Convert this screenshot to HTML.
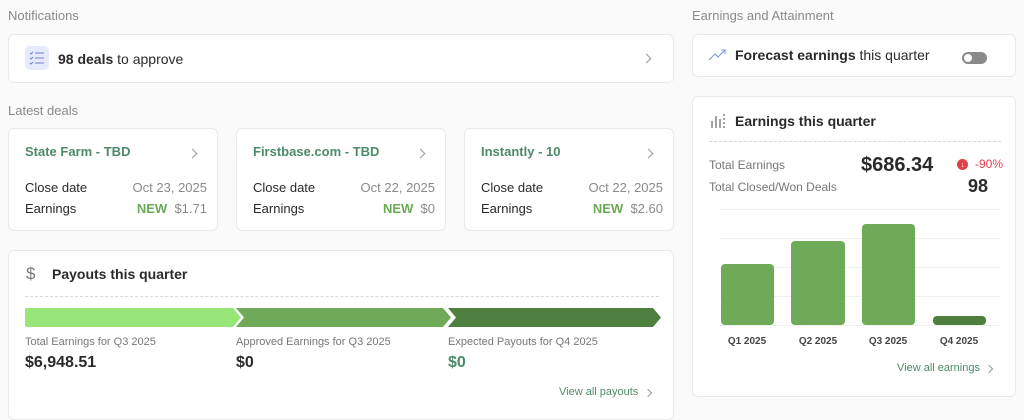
<!DOCTYPE html>
<html><head><style>
*{box-sizing:border-box;margin:0;padding:0}
body{width:1024px;height:410px;overflow:hidden;background:#fafafa;font-family:"Liberation Sans",sans-serif;position:relative;color:#2a2a2a}
.a{position:absolute}
.card{position:absolute;background:#fff;border:1px solid #e9e9e9;border-radius:6px}
.sec{color:#8a8a8a;font-size:13px}
.chev{position:absolute;width:7px;height:7px;border-right:1.2px solid #999;border-top:1.2px solid #999;transform:rotate(45deg)}
.dt{font-size:13px;color:#2a2a2a}
.gr{color:#8a8a8a}
.new{color:#6aaa55;font-weight:bold}
.ttl{color:#4d8a6a;font-weight:bold;font-size:13px}
.grid{position:absolute;left:720px;width:280px;height:1px;background:#efefef}
.bar{position:absolute;background:#6faa59;border-radius:4px}
.ql{position:absolute;font-size:10px;color:#444;top:336px;width:60px;text-align:center;font-weight:bold}
</style></head><body>
<div class="a sec" style="left:8px;top:8px">Notifications</div>
<div class="card" style="left:8px;top:34px;width:666px;height:49px">
  <div class="a" style="left:16px;top:11px;width:24px;height:24px;background:#e6ebfb;border-radius:5px">
    <svg width="24" height="24" viewBox="0 0 24 24" fill="none" stroke="#6c7fd8" stroke-width="1"><path d="M5 7l1 1 2-2M10 7h9M5 12l1 1 2-2M10 12h9M5 17l1 1 2-2M10 17h9"/></svg>
  </div>
  <div class="a" style="left:49px;top:16px;font-size:14px"><b>98 deals</b> to approve</div>
  <div class="chev" style="left:634px;top:20px"></div>
</div>
<div class="a sec" style="left:8px;top:103px">Latest deals</div>

<div class="card" style="left:8px;top:128px;width:210px;height:103px">
  <div class="a ttl" style="left:16px;top:15px">State Farm - TBD</div><div class="chev" style="left:180px;top:21px"></div>
  <div class="a dt" style="left:16px;top:51px">Close date</div><div class="a dt gr" style="right:10px;top:51px">Oct 23, 2025</div>
  <div class="a dt" style="left:16px;top:72px">Earnings</div><div class="a dt" style="right:10px;top:72px"><span class="new">NEW</span>&nbsp; <span class="gr">$1.71</span></div>
</div>
<div class="card" style="left:236px;top:128px;width:210px;height:103px">
  <div class="a ttl" style="left:16px;top:15px">Firstbase.com - TBD</div><div class="chev" style="left:180px;top:21px"></div>
  <div class="a dt" style="left:16px;top:51px">Close date</div><div class="a dt gr" style="right:10px;top:51px">Oct 22, 2025</div>
  <div class="a dt" style="left:16px;top:72px">Earnings</div><div class="a dt" style="right:10px;top:72px"><span class="new">NEW</span>&nbsp; <span class="gr">$0</span></div>
</div>
<div class="card" style="left:464px;top:128px;width:210px;height:103px">
  <div class="a ttl" style="left:16px;top:15px">Instantly - 10</div><div class="chev" style="left:180px;top:21px"></div>
  <div class="a dt" style="left:16px;top:51px">Close date</div><div class="a dt gr" style="right:10px;top:51px">Oct 22, 2025</div>
  <div class="a dt" style="left:16px;top:72px">Earnings</div><div class="a dt" style="right:10px;top:72px"><span class="new">NEW</span>&nbsp; <span class="gr">$2.60</span></div>
</div>

<div class="card" style="left:8px;top:250px;width:666px;height:170px">
  <div class="a" style="left:17px;top:13px;font-size:17px;color:#777">$</div>
  <div class="a" style="left:43px;top:15px;font-size:14px;font-weight:bold">Payouts this quarter</div>
  <div class="a" style="left:16px;top:45px;width:634px;border-top:1px dashed #d8d8d8"></div>
  <svg class="a" style="left:16px;top:57px" width="636" height="19">
    <path d="M0 2a2 2 0 012-2h206l8 9.5-8 9.5H2a2 2 0 01-2-2z" fill="#98e67a"/>
    <path d="M211 0h207l8 9.5-8 9.5H211l8-9.5z" fill="#6faa59"/>
    <path d="M423 0h205l8 9.5-8 9.5H423l8-9.5z" fill="#4f7f3f"/>
  </svg>
  <div class="a" style="left:16px;top:85px;font-size:11px;color:#777">Total Earnings for Q3 2025</div>
  <div class="a" style="left:16px;top:103px;font-size:16px;font-weight:bold">$6,948.51</div>
  <div class="a" style="left:227px;top:85px;font-size:11px;color:#777">Approved Earnings for Q3 2025</div>
  <div class="a" style="left:227px;top:103px;font-size:16px;font-weight:bold">$0</div>
  <div class="a" style="left:439px;top:85px;font-size:11px;color:#777">Expected Payouts for Q4 2025</div>
  <div class="a" style="left:439px;top:103px;font-size:16px;font-weight:bold;color:#4d8a6a">$0</div>
  <div class="a" style="left:550px;top:135px;font-size:11px;color:#4d8a6a">View all payouts</div>
  <div class="chev" style="left:636px;top:139px;width:6px;height:6px"></div>
</div>

<div class="a sec" style="left:692px;top:8px">Earnings and Attainment</div>
<div class="card" style="left:692px;top:34px;width:324px;height:43px">
  <svg class="a" style="left:16px;top:14px" width="18" height="12" fill="none" stroke="#7a95e0" stroke-width="1"><path d="M0 11l6-6 3 3 7-7M12 1h4v4"/></svg>
  <div class="a" style="left:42px;top:12px;font-size:14px"><b>Forecast earnings</b> this quarter</div>
  <div class="a" style="left:269px;top:17px;width:25px;height:12px;border-radius:6px;background:#8a8a8a"><div class="a" style="left:2px;top:2px;width:8px;height:8px;border-radius:50%;background:#fff"></div></div>
</div>
<div class="card" style="left:692px;top:96px;width:324px;height:301px">
  <svg class="a" style="left:17px;top:15px" width="16" height="16" stroke="#666" stroke-width="1.2"><path d="M2 9v7M6 4v12M10 7v9M14 2v2M14 6v2M14 10v2M14 14v2"/></svg>
  <div class="a" style="left:42px;top:16px;font-size:14px;font-weight:bold">Earnings this quarter</div>
  <div class="a" style="left:16px;top:44px;width:292px;border-top:1px dashed #d8d8d8"></div>
  <div class="a" style="left:16px;top:61px;font-size:12px;color:#777">Total Earnings</div>
  <div class="a" style="left:16px;top:83px;font-size:12px;color:#777">Total Closed/Won Deals</div>
  <div class="a" style="left:168px;top:57px;font-size:20px;font-weight:bold">$686.34</div>
  <div class="a" style="left:264px;top:62px;width:11px;height:11px;border-radius:50%;background:#e0404a;color:#fff;font-size:8px;text-align:center;line-height:11px;font-weight:bold">↓</div>
  <div class="a" style="left:282px;top:60px;font-size:12px;color:#e0404a">-90%</div>
  <div class="a" style="left:275px;top:79px;font-size:18px;font-weight:bold">98</div>
</div>
<div class="grid" style="top:209px"></div><div class="grid" style="top:238px"></div><div class="grid" style="top:267px"></div><div class="grid" style="top:296px"></div><div class="grid" style="top:325px"></div>
<div class="bar" style="left:721px;top:264px;width:53px;height:61px"></div>
<div class="bar" style="left:791px;top:241px;width:54px;height:84px"></div>
<div class="bar" style="left:862px;top:224px;width:53px;height:101px"></div>
<div class="bar" style="left:933px;top:316px;width:53px;height:9px;background:#4f7f3f"></div>
<div class="ql" style="left:717px">Q1 2025</div><div class="ql" style="left:788px">Q2 2025</div><div class="ql" style="left:858px">Q3 2025</div><div class="ql" style="left:929px">Q4 2025</div>
<div class="a" style="left:897px;top:362px;font-size:11px;color:#4d8a6a">View all earnings</div>
<div class="chev" style="left:986px;top:366px;width:6px;height:6px"></div>
</body></html>
